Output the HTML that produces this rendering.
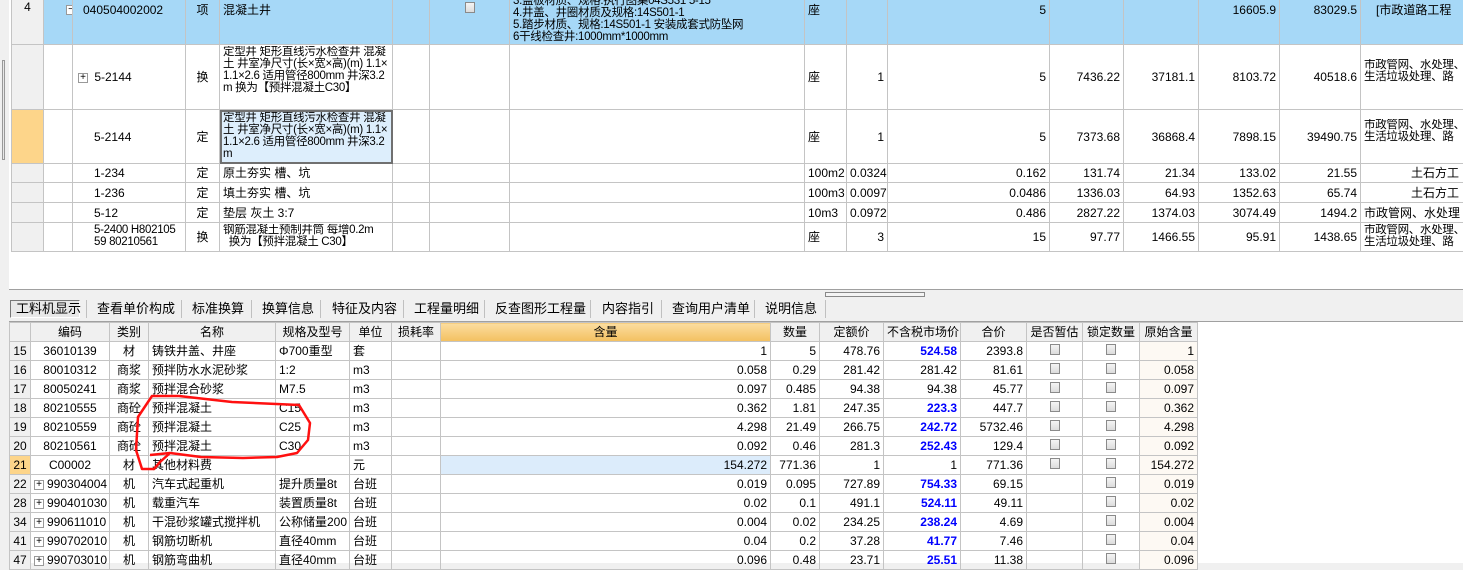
<!DOCTYPE html>
<html><head><meta charset="utf-8"><style>
*{box-sizing:border-box;margin:0;padding:0}
body{width:1463px;height:563px;overflow:hidden;background:#f0f0f0;position:relative;font:12px "Liberation Sans","Noto Sans CJK SC",sans-serif;color:#000}
table{border-collapse:collapse;table-layout:fixed;position:absolute}
td{border:1px solid #c4c4c4;white-space:nowrap;overflow:hidden;padding:0 3px;font-size:12px;line-height:14px}
.r{text-align:right}.c{text-align:center}
.top td{vertical-align:middle}
.w{white-space:normal;line-height:12px;word-break:break-all;overflow:hidden;font-size:11.5px;letter-spacing:-0.3px}
.num{background:#f0f0f0;text-align:center}
.blue td{background:#a6d8f7}
.cb{display:inline-block;width:10px;height:11px;border:1px solid #8a8a8a;background:linear-gradient(#f4f4f4,#dcdcdc)}
.bl{color:#0000ff;font-weight:bold}
.hd td{background:#f0f0f0;text-align:center;height:21px}
.bot td{height:19px}
.orig{background:#fdf9f3}
.pl{display:inline-block;width:10px;height:10px;border:1px solid #999;font-size:10px;line-height:8px;text-align:center;background:#fff;margin-right:3px;vertical-align:middle}
.tab{position:absolute;top:300px;height:18px;line-height:18px;font-size:13px}
.sep{position:absolute;top:300px;width:1px;height:18px;background:#c0c0c0}
</style></head><body>
<div style="position:absolute;left:9px;top:0;width:1454px;height:290px;background:#fff;border-bottom:1px solid #a0a0a0"></div>
<div style="position:absolute;left:2px;top:60px;width:3px;height:100px;border:1px solid #999;background:#e8e8e8"></div>

<table class="top" style="left:11px;top:-1px;width:1459px">
<colgroup><col style="width:32px"><col style="width:29px"><col style="width:113px"><col style="width:34px"><col style="width:173px"><col style="width:37px"><col style="width:80px"><col style="width:295px"><col style="width:42px"><col style="width:41px"><col style="width:162px"><col style="width:74px"><col style="width:75px"><col style="width:81px"><col style="width:81px"><col style="width:110px"></colgroup>
<tr class="blue" style="height:45px"><td class="num" style="vertical-align:top;background:#f0f0f0">4</td><td style="vertical-align:top;padding:2px 0 0 22px"><span class="pl">−</span></td><td style="vertical-align:top;padding-top:3px;padding-left:10px;overflow:visible">040504002002</td><td class="c" style="vertical-align:top;padding-top:3px">项</td><td style="vertical-align:top;padding-top:3px">混凝土井</td><td></td><td style="vertical-align:top;text-align:center;padding-top:2px"><span class="cb"></span></td><td style="vertical-align:bottom;padding-bottom:1px"><div class="w" style="height:43px;display:flex;flex-direction:column;justify-content:flex-end">3.盖板材质、规格:执行图集04S531 5-15<br>4.井盖、井圈材质及规格:14S501-1<br>5.踏步材质、规格:14S501-1 安装成套式防坠网<br>6干线检查井:1000mm*1000mm</div></td><td style="vertical-align:top;padding-top:3px">座</td><td></td><td class="r" style="vertical-align:top;padding-top:3px">5</td><td></td><td></td><td class="r" style="vertical-align:top;padding-top:3px">16605.9</td><td class="r" style="vertical-align:top;padding-top:3px">83029.5</td><td style="vertical-align:top;padding-top:3px;padding-left:15px">[市政道路工程</td></tr>
<tr style="height:65px"><td class="num"></td><td></td><td style="padding-left:5px"><span class="pl">+</span>&nbsp;5-2144</td><td class="c">换</td><td><div class="w" style="height:62px">定型井 矩形直线污水检查井 混凝土 井室净尺寸(长×宽×高)(m) 1.1×1.1×2.6 适用管径800mm 井深3.2m 换为【预拌混凝土C30】</div></td><td></td><td></td><td></td><td>座</td><td class="r">1</td><td class="r">5</td><td class="r">7436.22</td><td class="r">37181.1</td><td class="r">8103.72</td><td class="r">40518.6</td><td><div class="w" style="height:36px">市政管网、水处理、生活垃圾处理、路</div></td></tr>
<tr style="height:54px"><td class="num" style="background:#fdd58a"></td><td></td><td style="padding-left:21px">5-2144</td><td class="c">定</td><td style="background:#ddeefc;outline:2px solid #707070;outline-offset:-2px;vertical-align:top;padding-top:2px"><div class="w" style="height:48px">定型井 矩形直线污水检查井 混凝土 井室净尺寸(长×宽×高)(m) 1.1×1.1×2.6 适用管径800mm 井深3.2m</div></td><td></td><td></td><td></td><td>座</td><td class="r">1</td><td class="r">5</td><td class="r">7373.68</td><td class="r">36868.4</td><td class="r">7898.15</td><td class="r">39490.75</td><td><div class="w" style="height:36px">市政管网、水处理、生活垃圾处理、路</div></td></tr>
<tr style="height:19px"><td class="num"></td><td></td><td style="padding-left:21px">1-234</td><td class="c">定</td><td>原土夯实 槽、坑</td><td></td><td></td><td></td><td>100m2</td><td>0.0324</td><td class="r">0.162</td><td class="r">131.74</td><td class="r">21.34</td><td class="r">133.02</td><td class="r">21.55</td><td style="padding-left:50px">土石方工</td></tr>
<tr style="height:20px"><td class="num"></td><td></td><td style="padding-left:21px">1-236</td><td class="c">定</td><td>填土夯实 槽、坑</td><td></td><td></td><td></td><td>100m3</td><td>0.0097</td><td class="r">0.0486</td><td class="r">1336.03</td><td class="r">64.93</td><td class="r">1352.63</td><td class="r">65.74</td><td style="padding-left:50px">土石方工</td></tr>
<tr style="height:20px"><td class="num"></td><td></td><td style="padding-left:21px">5-12</td><td class="c">定</td><td>垫层 灰土 3:7</td><td></td><td></td><td></td><td>10m3</td><td>0.0972</td><td class="r">0.486</td><td class="r">2827.22</td><td class="r">1374.03</td><td class="r">3074.49</td><td class="r">1494.2</td><td>市政管网、水处理</td></tr>
<tr style="height:29px"><td class="num"></td><td></td><td style="padding-left:21px"><div class="w" style="height:26px">5-2400 H802105 59 80210561</div></td><td class="c">换</td><td><div class="w" style="height:26px">钢筋混凝土预制井筒 每增0.2m<br>&nbsp;&nbsp;换为【预拌混凝土 C30】</div></td><td></td><td></td><td></td><td>座</td><td class="r">3</td><td class="r">15</td><td class="r">97.77</td><td class="r">1466.55</td><td class="r">95.91</td><td class="r">1438.65</td><td><div class="w" style="height:26px">市政管网、水处理、生活垃圾处理、路</div></td></tr>
</table>

<div style="position:absolute;left:825px;top:292px;width:100px;height:5px;border:1px solid #888;background:#f4f4f4"></div>
<div style="position:absolute;left:10px;top:300px;width:70px;height:18px;border:1px solid #777;border-right-color:#fff;border-bottom-color:#fff;background:#e8e8e8"></div>
<div class="tab" style="left:16px">工料机显示</div>
<div class="sep" style="left:86px"></div><div class="tab" style="left:97px">查看单价构成</div>
<div class="sep" style="left:181px"></div><div class="tab" style="left:192px">标准换算</div>
<div class="sep" style="left:251px"></div><div class="tab" style="left:262px">换算信息</div>
<div class="sep" style="left:320px"></div><div class="tab" style="left:332px">特征及内容</div>
<div class="sep" style="left:403px"></div><div class="tab" style="left:414px">工程量明细</div>
<div class="sep" style="left:484px"></div><div class="tab" style="left:495px">反查图形工程量</div>
<div class="sep" style="left:590px"></div><div class="tab" style="left:602px">内容指引</div>
<div class="sep" style="left:661px"></div><div class="tab" style="left:672px">查询用户清单</div>
<div class="sep" style="left:754px"></div><div class="tab" style="left:765px">说明信息</div>
<div class="sep" style="left:825px"></div>
<div style="position:absolute;left:9px;top:321px;width:1454px;height:242px;background:#fff;border-top:1px solid #a0a0a0"></div>

<table class="bot" style="left:9px;top:322px;width:1188px">
<colgroup><col style="width:21px"><col style="width:79px"><col style="width:39px"><col style="width:127px"><col style="width:74px"><col style="width:42px"><col style="width:49px"><col style="width:330px"><col style="width:49px"><col style="width:64px"><col style="width:77px"><col style="width:66px"><col style="width:56px"><col style="width:57px"><col style="width:58px"></colgroup>
<tr class="hd"><td></td><td>编码</td><td>类别</td><td>名称</td><td>规格及型号</td><td>单位</td><td>损耗率</td><td style="background:linear-gradient(#fbdda0,#f3c060)">含量</td><td>数量</td><td>定额价</td><td>不含税市场价</td><td>合价</td><td>是否暂估</td><td>锁定数量</td><td>原始含量</td></tr>
<tr><td class="num">15</td><td class="c">36010139</td><td class="c">材</td><td>铸铁井盖、井座</td><td>Φ700重型</td><td>套</td><td></td><td class="r">1</td><td class="r">5</td><td class="r">478.76</td><td class="r bl">524.58</td><td class="r">2393.8</td><td class="c"><span class="cb"></span></td><td class="c"><span class="cb"></span></td><td class="r orig">1</td></tr>
<tr><td class="num">16</td><td class="c">80010312</td><td class="c">商浆</td><td>预拌防水水泥砂浆</td><td>1:2</td><td>m3</td><td></td><td class="r">0.058</td><td class="r">0.29</td><td class="r">281.42</td><td class="r">281.42</td><td class="r">81.61</td><td class="c"><span class="cb"></span></td><td class="c"><span class="cb"></span></td><td class="r orig">0.058</td></tr>
<tr><td class="num">17</td><td class="c">80050241</td><td class="c">商浆</td><td>预拌混合砂浆</td><td>M7.5</td><td>m3</td><td></td><td class="r">0.097</td><td class="r">0.485</td><td class="r">94.38</td><td class="r">94.38</td><td class="r">45.77</td><td class="c"><span class="cb"></span></td><td class="c"><span class="cb"></span></td><td class="r orig">0.097</td></tr>
<tr><td class="num">18</td><td class="c">80210555</td><td class="c">商砼</td><td>预拌混凝土</td><td>C15</td><td>m3</td><td></td><td class="r">0.362</td><td class="r">1.81</td><td class="r">247.35</td><td class="r bl">223.3</td><td class="r">447.7</td><td class="c"><span class="cb"></span></td><td class="c"><span class="cb"></span></td><td class="r orig">0.362</td></tr>
<tr><td class="num">19</td><td class="c">80210559</td><td class="c">商砼</td><td>预拌混凝土</td><td>C25</td><td>m3</td><td></td><td class="r">4.298</td><td class="r">21.49</td><td class="r">266.75</td><td class="r bl">242.72</td><td class="r">5732.46</td><td class="c"><span class="cb"></span></td><td class="c"><span class="cb"></span></td><td class="r orig">4.298</td></tr>
<tr><td class="num">20</td><td class="c">80210561</td><td class="c">商砼</td><td>预拌混凝土</td><td>C30</td><td>m3</td><td></td><td class="r">0.092</td><td class="r">0.46</td><td class="r">281.3</td><td class="r bl">252.43</td><td class="r">129.4</td><td class="c"><span class="cb"></span></td><td class="c"><span class="cb"></span></td><td class="r orig">0.092</td></tr>
<tr><td class="num" style="background:#fdd58a">21</td><td class="c">C00002</td><td class="c">材</td><td>其他材料费</td><td></td><td>元</td><td></td><td class="r" style="background:#dcecfb">154.272</td><td class="r">771.36</td><td class="r">1</td><td class="r">1</td><td class="r">771.36</td><td class="c"><span class="cb"></span></td><td class="c"><span class="cb"></span></td><td class="r orig">154.272</td></tr>
<tr><td class="num">22</td><td><span class="pl">+</span>990304004</td><td class="c">机</td><td>汽车式起重机</td><td>提升质量8t</td><td>台班</td><td></td><td class="r">0.019</td><td class="r">0.095</td><td class="r">727.89</td><td class="r bl">754.33</td><td class="r">69.15</td><td></td><td class="c"><span class="cb"></span></td><td class="r orig">0.019</td></tr>
<tr><td class="num">28</td><td><span class="pl">+</span>990401030</td><td class="c">机</td><td>载重汽车</td><td>装置质量8t</td><td>台班</td><td></td><td class="r">0.02</td><td class="r">0.1</td><td class="r">491.1</td><td class="r bl">524.11</td><td class="r">49.11</td><td></td><td class="c"><span class="cb"></span></td><td class="r orig">0.02</td></tr>
<tr><td class="num">34</td><td><span class="pl">+</span>990611010</td><td class="c">机</td><td>干混砂浆罐式搅拌机</td><td>公称储量200</td><td>台班</td><td></td><td class="r">0.004</td><td class="r">0.02</td><td class="r">234.25</td><td class="r bl">238.24</td><td class="r">4.69</td><td></td><td class="c"><span class="cb"></span></td><td class="r orig">0.004</td></tr>
<tr><td class="num">41</td><td><span class="pl">+</span>990702010</td><td class="c">机</td><td>钢筋切断机</td><td>直径40mm</td><td>台班</td><td></td><td class="r">0.04</td><td class="r">0.2</td><td class="r">37.28</td><td class="r bl">41.77</td><td class="r">7.46</td><td></td><td class="c"><span class="cb"></span></td><td class="r orig">0.04</td></tr>
<tr><td class="num">47</td><td><span class="pl">+</span>990703010</td><td class="c">机</td><td>钢筋弯曲机</td><td>直径40mm</td><td>台班</td><td></td><td class="r">0.096</td><td class="r">0.48</td><td class="r">23.71</td><td class="r bl">25.51</td><td class="r">11.38</td><td></td><td class="c"><span class="cb"></span></td><td class="r orig">0.096</td></tr>
</table>

<svg style="position:absolute;left:0;top:0" width="1463" height="563"><path d="M150 455 L170 453 L160 462 L154 469 L142 469 L136 450 L138 417 L152 396 L179 396 L232 402 L299 405 L310 423 L308 440 L297 453 L277 457 L243 458 L201 457 L170 453 L150 455" fill="none" stroke="#ff1010" stroke-width="2.5" stroke-linejoin="round"/></svg>
</body></html>
